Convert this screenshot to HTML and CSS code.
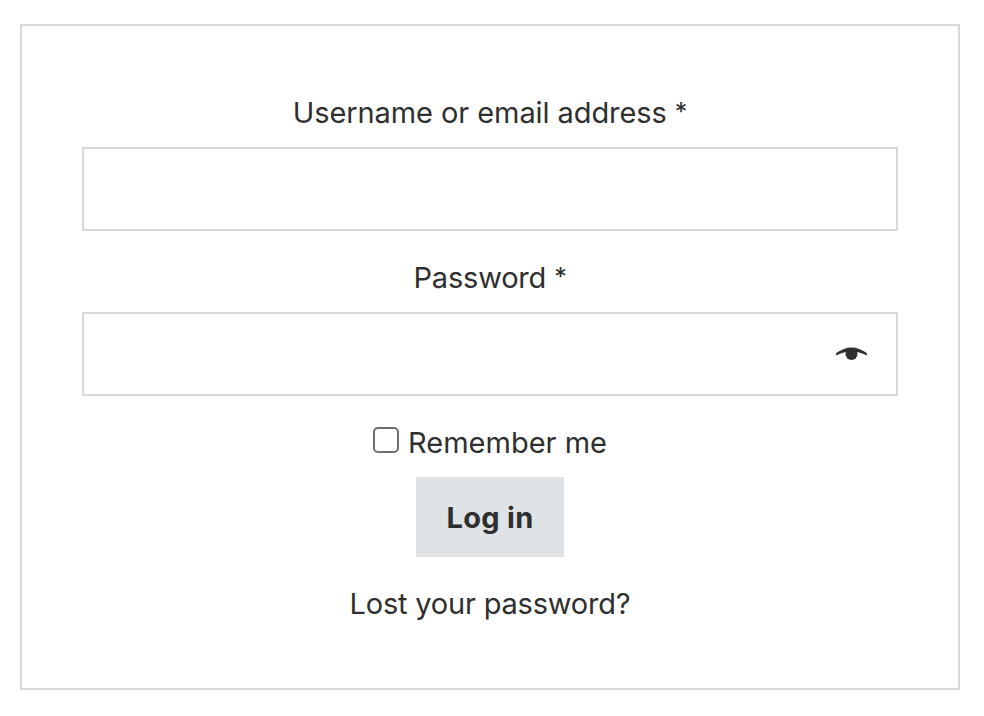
FILE: index.html
```html
<!DOCTYPE html>
<html lang="en">
<head>
    <meta charset="UTF-8">
    <meta name="viewport" content="width=device-width, initial-scale=1.0">
    <title>Log in</title>
    <link rel="stylesheet" href="styles.css">
</head>
<body>
    <form class="login-form">
        <label class="username-label" for="username">Username or email address&nbsp;<span class="required">*</span></label>
        <input class="text-input" type="text" id="username" name="username">

        <label for="password">Password&nbsp;<span class="required">*</span></label>
        <div class="password-input">
            <input class="text-input" type="password" id="password" name="password">
            <!-- Show / hide password -->
            <button type="button" class="show-password" aria-label="Show password">
                <svg viewBox="0 0 32 16" width="32" height="16">
                    <path d="M1.2 7Q16.5 -4.2 31.8 7V9.6Q16.5 1.2 1.2 9.6Z" fill="#2f2f2f"/>
                    <circle cx="16.5" cy="8" r="6" fill="#2f2f2f"/>
                </svg>
            </button>
        </div>

        <label class="remember">
            <input type="checkbox" name="rememberme">
            <span>Remember me</span>
        </label>
        <button type="submit" class="login-btn">Log in</button>
        <a class="lost-password" href="#">Lost your password?</a>
    </form>
</body>
</html>
```

FILE: styles.css
```css
* {
    box-sizing: border-box;
}

body {
    margin: 0;
    padding: 24px 24px 26px 20px;
    background-color: #ffffff;
    color: #2f2f2f;
    font-family: Inter, 'Liberation Sans', sans-serif;
    font-size: 29px;
    line-height: 45px;
    letter-spacing: -0.2px;
}

/* Form box */
.login-form {
    display: flex;
    flex-direction: column;
    align-items: center;
    width: 940px;
    height: 666px;
    padding: 64px 60px 0;
    border: 2px solid #d9d9d9;
}

/* Fields */
.username-label {
    letter-spacing: -0.08px;
}

.required {
    font-size: 25px;
    line-height: 1;
    vertical-align: 2px;
}

.text-input {
    display: block;
    width: 816px;
    height: 84px;
    margin: 12px 0 24px;
    padding: 0 24px;
    border: 2px solid #d9d9d9;
    border-radius: 0;
    background-color: #ffffff;
    font: inherit;
    outline: none;
}

.password-input {
    position: relative;
}

.show-password {
    position: absolute;
    top: 46px;
    right: 31px;
    padding: 0;
    border: none;
    background: none;
    line-height: 0;
    cursor: pointer;
}

/* Remember me */
.remember {
    display: flex;
    align-items: center;
    letter-spacing: 0;
}

.remember input {
    appearance: none;
    width: 26px;
    height: 26px;
    margin: 0 9px 6px 0;
    border: 2px solid #6f6f6f;
    border-radius: 5px;
}

/* Login button */
.login-btn {
    width: 148px;
    height: 80px;
    margin: 12px 0 24px;
    padding: 0;
    border: none;
    background-color: #dfe3e6;
    color: #2f2f2f;
    font: inherit;
    font-weight: 700;
    letter-spacing: 0.3px;
    cursor: pointer;
}

.lost-password {
    color: #2f2f2f;
    text-decoration: none;
}
```
